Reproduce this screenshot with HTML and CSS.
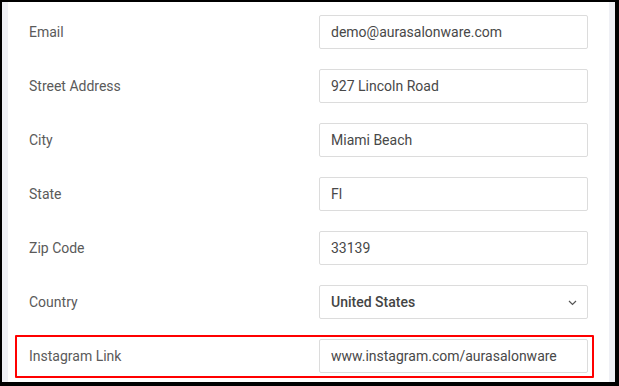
FILE: index.html
```html
<!DOCTYPE html>
<html>
<head>
    <meta charset="utf-8"/>
    <title>Salon Settings - Contact</title>
    <link rel="stylesheet" href="styles.css">
</head>
<body>
<div class="frame">
    <div class="gutter"></div>
    <form class="panel">
        <div class="formRow">
            <label class="formLabel">Email</label>
            <div class="formField"><input class="formInput" type="text" value="demo@aurasalonware.com"></div>
        </div>
        <div class="formRow">
            <label class="formLabel">Street Address</label>
            <div class="formField"><input class="formInput" type="text" value="927 Lincoln Road"></div>
        </div>
        <div class="formRow">
            <label class="formLabel">City</label>
            <div class="formField"><input class="formInput" type="text" value="Miami Beach"></div>
        </div>
        <div class="formRow">
            <label class="formLabel">State</label>
            <div class="formField"><input class="formInput" type="text" value="Fl"></div>
        </div>
        <div class="formRow">
            <label class="formLabel">Zip Code</label>
            <div class="formField"><input class="formInput" type="text" value="33139"></div>
        </div>
        <div class="formRow">
            <label class="formLabel">Country</label>
            <div class="formField">
                <div class="formSelect">
                    <span>United States</span>
                    <svg class="chevron" width="9" height="6" viewBox="0 0 9 6">
                        <path d="M1 1 L4.5 4.5 L8 1" fill="none" stroke="#555" stroke-width="1.2"/>
                    </svg>
                </div>
            </div>
        </div>
        <!--高亮行-->
        <div class="formRow highlight">
            <label class="formLabel">Instagram Link</label>
            <div class="formField"><input class="formInput" type="text" value="www.instagram.com/aurasalonware"></div>
        </div>
    </form>
    <div class="gutter"></div>
</div>
</body>
</html>
```

FILE: styles.css
```css
body {
    margin: 0;
    font-family: Roboto, "Liberation Sans", Arial, sans-serif;
}

.frame {
    display: flex;
    width: 613px;
    height: 380px;
    border-style: solid;
    border-color: #000;
    border-width: 2px 4px 4px 2px;
    background: #fff;
}

.gutter {
    width: 6px;
    background: #eff0f5;
}

.panel {
    flex: 1;
    margin: 0;
    padding-top: 3px;
    overflow: hidden;
    background: #fff;
}

.formRow {
    position: relative;
    height: 54px;
    display: flex;
    align-items: center;
    padding: 0 21px;
}

.formLabel {
    flex: 1;
    font-size: 14px;
    color: #5a5a5a;
}

.formField {
    width: 269px;
}

.formInput {
    box-sizing: border-box;
    width: 100%;
    height: 34px;
    border: 1px solid #dcdcdc;
    border-radius: 2px;
    padding: 0 11px;
    font-family: Roboto, "Liberation Sans", Arial, sans-serif;
    font-size: 14px;
    color: #484848;
    outline: none;
}

.formSelect {
    box-sizing: border-box;
    height: 34px;
    border: 1px solid #dcdcdc;
    border-radius: 2px;
    padding: 0 10px 0 11px;
    display: flex;
    align-items: center;
    justify-content: space-between;
    font-size: 14px;
    font-weight: 500;
    color: #444;
}

.chevron {
    margin-top: 1px;
}

.highlight::after {
    content: "";
    position: absolute;
    left: 7px;
    right: 15px;
    top: 6px;
    bottom: 5px;
    border: 2px solid #f00;
    border-radius: 1px;
    pointer-events: none;
}
```
